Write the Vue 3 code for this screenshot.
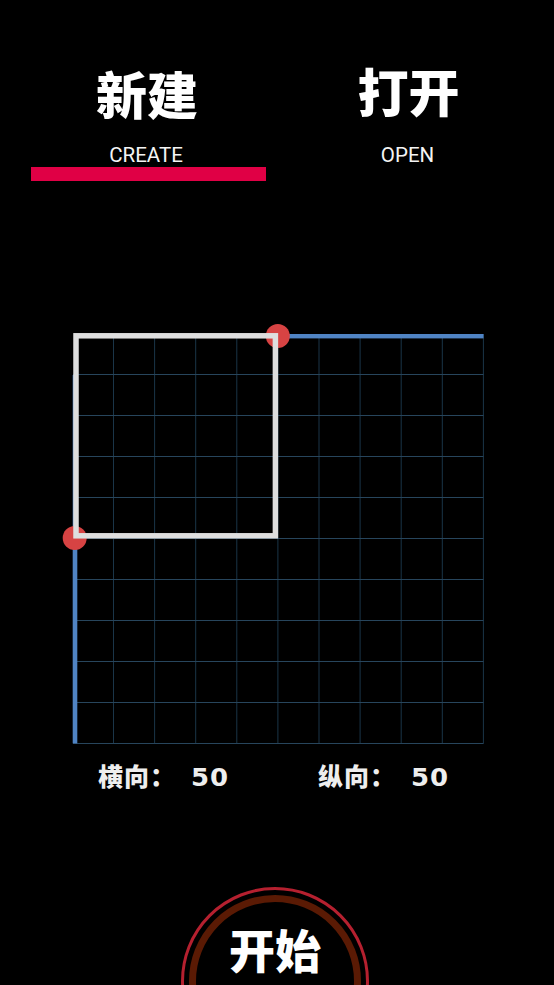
<template>
  <div class="page">
    <div class="tabs">
      <div v-for="tab in tabs" :key="tab.en" class="tab">
        <div class="tab-title" :class="tab.cls">{{ tab.zh }}</div>
        <div class="tab-en" :class="tab.cls">{{ tab.en }}</div>
        <div class="tab-bar" :class="{ active: tab.active }"></div>
      </div>
    </div>

    <svg class="board" width="430" height="430" viewBox="0 0 430 430">
      <g stroke-width="1">
        <line v-for="x in columns" :key="'v' + x" :x1="x" y1="14" :x2="x" y2="423.5" stroke="#1a3548" />
        <line v-for="y in rows" :key="'h' + y" x1="13" :y1="y" x2="423.5" :y2="y" stroke="#27455c" />
      </g>
      <rect x="12.7" y="55" width="4.6" height="368.4" fill="#5084c4" />
      <rect x="218" y="14" width="205.5" height="4.4" fill="#5084c4" />
      <circle cx="217.8" cy="16" r="12" fill="#d74343" />
      <circle cx="14.7" cy="218" r="12" fill="#d74343" />
      <rect x="16" y="15.8" width="199.4" height="200" fill="none" stroke="#dedede" stroke-width="5.5" />
    </svg>

    <div class="sizes">
      <div class="size"><span class="size-label">横向：</span><span class="size-num">50</span></div>
      <div class="size"><span class="size-label">纵向：</span><span class="size-num">50</span></div>
    </div>

    <div class="start">
      <div class="start-inner">开始</div>
    </div>
  </div>
</template>

<script setup>
const tabs = [
  { zh: "新建", en: "CREATE", active: true, cls: "first" },
  { zh: "打开", en: "OPEN", active: false, cls: "second" },
];

// 10 x 10 grid, positions inside the svg
const columns = Array.from({ length: 10 }, (_, i) => 53.5 + i * 41.1);
const rows = Array.from({ length: 10 }, (_, i) => 54.5 + i * 41);
</script>

<style>
html,
body {
  margin: 0;
  background: #000;
}
</style>

<style scoped>
.page {
  width: 554px;
  height: 985px;
  background: #000;
  overflow: hidden;
  color: #fff;
  font-family: "Noto Sans CJK SC", "Noto Sans", sans-serif;
}

.tabs {
  display: grid;
  grid-template-columns: 235px 235px;
  gap: 24px;
  padding: 59px 0 0 31px;
}

.tab {
  display: flex;
  flex-direction: column;
  align-items: center;
}

.tab-title {
  font-size: 51px;
  font-weight: 900;
  line-height: 68px;
  height: 83px;
}

.tab-title.first {
  margin-left: -3px;
}

.tab-title.second {
  margin-top: -3px;
  height: 86px;
  margin-left: 2px;
}

.tab-en {
  font-family: Roboto, "Liberation Sans", sans-serif;
  font-size: 20.5px;
  line-height: 26px;
  height: 25px;
  color: #f4f4f4;
}

.tab-en.first {
  margin-left: -5px;
}

.tab-bar {
  align-self: stretch;
  height: 14px;
}

.tab-bar.active {
  background: #e00045;
}

.board {
  display: block;
  margin: 139px 0 0 60px;
}

.sizes {
  display: grid;
  grid-template-columns: 220px 220px;
  padding-left: 98px;
  margin-top: 7px;
}

.size {
  display: flex;
  align-items: center;
  height: 36px;
}

.size-label {
  font-size: 25px;
  font-weight: 900;
  letter-spacing: 1px;
  width: 93px;
  color: #eee;
}

/* the digits in the design are wider than any installed face */
.size-num {
  font-family: "DejaVu Sans", sans-serif;
  font-size: 24px;
  font-weight: 700;
  letter-spacing: 1px;
  margin-top: 5px;
  color: #eee;
  transform: scaleX(1.08);
  transform-origin: left center;
}

.start {
  box-sizing: border-box;
  width: 188px;
  height: 188px;
  margin: 94px 0 0 181px;
  border: 3px solid #b5202f;
  border-radius: 50%;
  padding: 5px;
}

.start-inner {
  box-sizing: border-box;
  height: 100%;
  border: 7px solid #5a1a04;
  border-radius: 50%;
  display: flex;
  justify-content: center;
  padding-top: 16px;
  font-size: 46px;
  font-weight: 900;
  line-height: 60px;
}
</style>
